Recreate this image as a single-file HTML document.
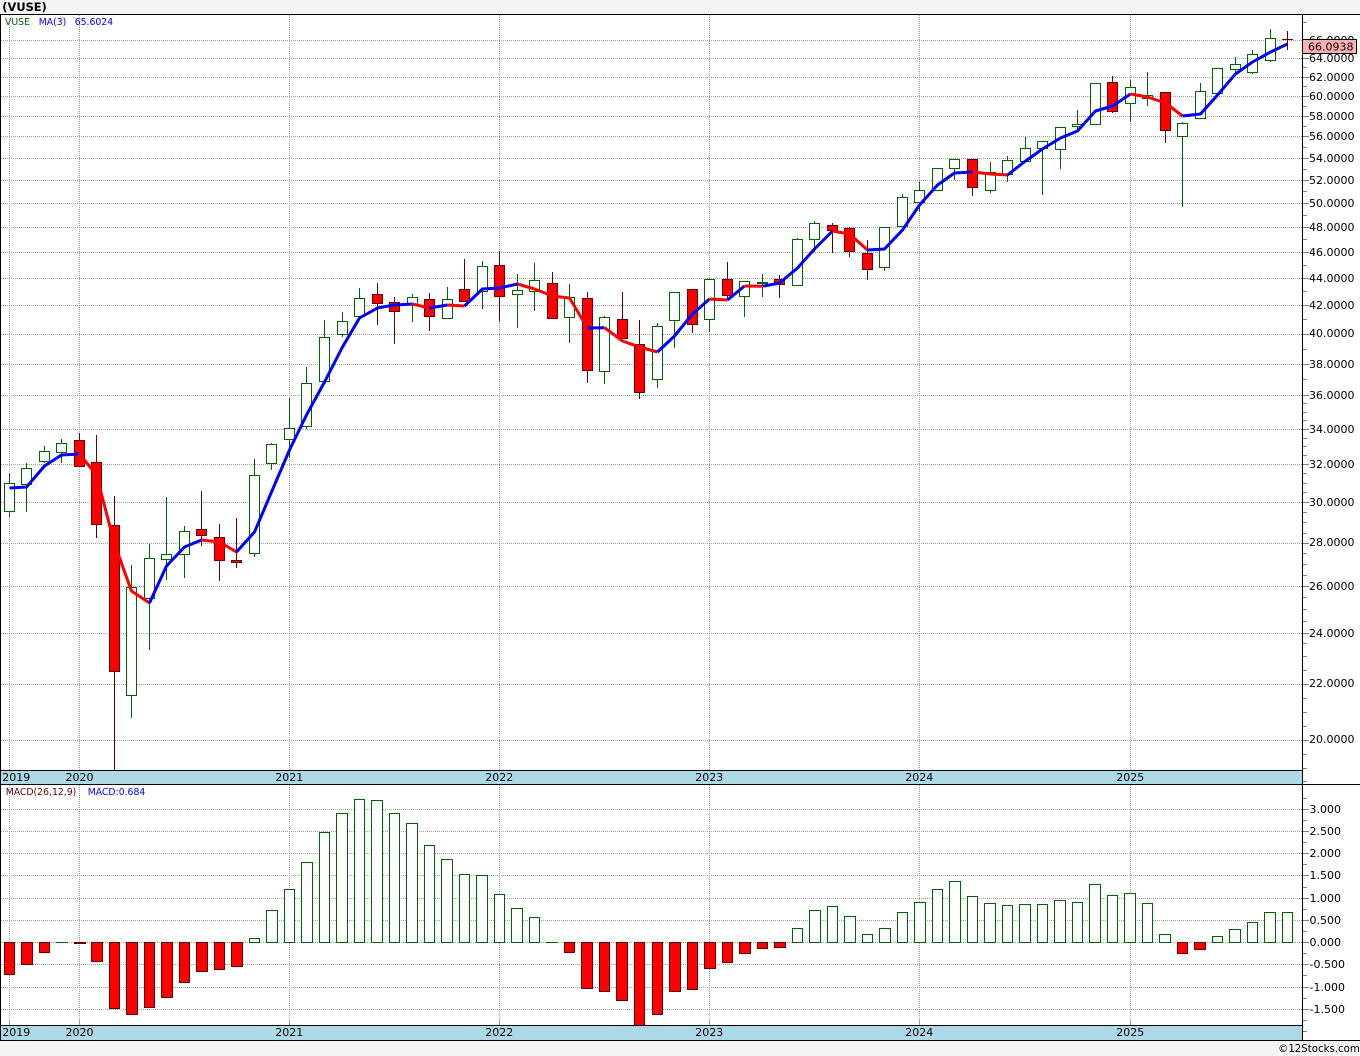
<!DOCTYPE html>
<html lang="en">
<head>
<meta charset="utf-8">
<title>(VUSE)</title>
<style>
html,body{margin:0;padding:0;background:#f4f4f4;}
body{width:1360px;height:1056px;overflow:hidden;position:relative;}
svg{position:absolute;left:0;top:0;display:block;}
text{font-family:"DejaVu Sans","Liberation Sans",sans-serif;font-size:11px;fill:#000008;}
.t{font-size:11px;}
.s{font-size:9.3px;}
</style>
</head>
<body>
<svg width="1360" height="1056" viewBox="0 0 1360 1056" xmlns="http://www.w3.org/2000/svg">
<rect x="0" y="0" width="1360" height="1056" fill="#f4f4f4"/>
<rect x="1" y="15" width="1359" height="1025" fill="#ffffff"/>

<!-- grid -->
<path shape-rendering="crispEdges" fill="none" stroke="#a0a0a0" stroke-width="1" stroke-dasharray="1 1" d="M1 40.5H1302M1 58.5H1302M1 77.5H1302M1 96.5H1302M1 116.5H1302M1 136.5H1302M1 158.5H1302M1 180.5H1302M1 203.5H1302M1 227.5H1302M1 252.5H1302M1 278.5H1302M1 305.5H1302M1 334.5H1302M1 364.5H1302M1 395.5H1302M1 429.5H1302M1 464.5H1302M1 502.5H1302M1 543.5H1302M1 586.5H1302M1 633.5H1302M1 684.5H1302M1 740.5H1302
M1 809.5H1302M1 831.5H1302M1 853.5H1302M1 875.5H1302M1 898.5H1302M1 920.5H1302M1 942.5H1302M1 964.5H1302M1 987.5H1302M1 1009.5H1302
M9.5 15V770M79.5 15V770M289.5 15V770M499.5 15V770M709.5 15V770M919.5 15V770M1130.5 15V770
M9.5 785V1025M79.5 785V1025M289.5 785V1025M499.5 785V1025M709.5 785V1025M919.5 785V1025M1130.5 785V1025"/>
<path shape-rendering="crispEdges" fill="none" stroke="#a0a0a0" stroke-width="1" d="M9.5 1020V1025M79.5 1020V1025M289.5 1020V1025M499.5 1020V1025M709.5 1020V1025M919.5 1020V1025M1130.5 1020V1025"/>

<!-- candle wicks -->
<path shape-rendering="crispEdges" fill="none" stroke="#006400" stroke-width="1" d="M9.5 473V517M26.5 463V512M44.5 446V463M61.5 439V463M131.5 565V718M149.5 544V650M166.5 497V580M184.5 526V578M254.5 459V557M271.5 443V470M289.5 398V458M306.5 367V429M324.5 320V381M342.5 312V337M359.5 288V316M412.5 294V322M447.5 287V318M482.5 261V309M517.5 274V328M534.5 263V311M569.5 284V343M604.5 316V384M657.5 323V388M674.5 292V348M709.5 279V332M744.5 281V317M762.5 274V297M797.5 238V285M814.5 221V252M884.5 227V271M902.5 194V226M919.5 182V212M937.5 168V190M954.5 159V180M990.5 162V193M1007.5 156V182M1025.5 137V161M1042.5 141V195M1060.5 127V169M1077.5 110V129M1095.5 83V124M1130.5 80V121M1147.5 72V106M1182.5 122V207M1200.5 83V119M1217.5 68V93M1235.5 57V75M1252.5 50V74M1270.5 29V62"/>
<path shape-rendering="crispEdges" fill="none" stroke="#640000" stroke-width="1" d="M79.5 433V467M96.5 435V538M114.5 496V770M201.5 491V546M219.5 524V581M236.5 518V568M377.5 283V325M394.5 297V344M429.5 293V331M464.5 259V301M499.5 251V321M552.5 272V318M587.5 292V383M622.5 292V338M639.5 320V399M692.5 289V333M727.5 262V300M779.5 275V298M832.5 223V253M849.5 227V257M867.5 240V280M972.5 159V196M1112.5 76V113M1165.5 92V143M1287.5 31V50M1282 39.5H1293"/>

<!-- candle bodies: green hollow -->
<path shape-rendering="crispEdges" fill="#ffffff" stroke="#006400" stroke-width="1" d="M4.5 483.5h10v28h-10zM21.5 468.5h10v16h-10zM39.5 451.5h10v10h-10zM56.5 443.5h10v9h-10zM126.5 587.5h10v108h-10zM144.5 558.5h10v40h-10zM161.5 554.5h10v5h-10zM179.5 531.5h10v23h-10zM249.5 475.5h10v78h-10zM266.5 444.5h10v19h-10zM284.5 428.5h10v11h-10zM301.5 383.5h10v43h-10zM319.5 337.5h10v44h-10zM337.5 321.5h10v13h-10zM354.5 298.5h10v18h-10zM407.5 297.5h10v7h-10zM442.5 299.5h10v19h-10zM477.5 266.5h10v25h-10zM512.5 290.5h10v4h-10zM529.5 280.5h10v11h-10zM564.5 297.5h10v20h-10zM599.5 317.5h10v54h-10zM652.5 326.5h10v53h-10zM669.5 292.5h10v28h-10zM704.5 279.5h10v40h-10zM739.5 281.5h10v15h-10zM757.5 282.5h10v1h-10zM792.5 239.5h10v46h-10zM809.5 223.5h10v16h-10zM879.5 227.5h10v40h-10zM897.5 197.5h10v29h-10zM914.5 190.5h10v12h-10zM932.5 168.5h10v22h-10zM949.5 159.5h10v9h-10zM985.5 172.5h10v18h-10zM1002.5 160.5h10v14h-10zM1020.5 148.5h10v13h-10zM1037.5 141.5h10v7h-10zM1055.5 127.5h10v22h-10zM1072.5 124.5h10v2h-10zM1090.5 83.5h10v41h-10zM1125.5 87.5h10v16h-10zM1142.5 95.5h10v3h-10zM1177.5 123.5h10v13h-10zM1195.5 91.5h10v27h-10zM1212.5 68.5h10v25h-10zM1230.5 64.5h10v5h-10zM1247.5 54.5h10v18h-10zM1265.5 38.5h10v22h-10z"/>
<!-- candle bodies: red -->
<path shape-rendering="crispEdges" fill="#ff0000" stroke="#640000" stroke-width="1" d="M74.5 440.5h10v26h-10zM91.5 462.5h10v62h-10zM109.5 525.5h10v146h-10zM196.5 529.5h10v6h-10zM214.5 537.5h10v23h-10zM231.5 560.5h10v2h-10zM372.5 294.5h10v9h-10zM389.5 302.5h10v9h-10zM424.5 299.5h10v17h-10zM459.5 289.5h10v12h-10zM494.5 265.5h10v31h-10zM547.5 283.5h10v35h-10zM582.5 298.5h10v72h-10zM617.5 319.5h10v19h-10zM634.5 344.5h10v48h-10zM687.5 289.5h10v35h-10zM722.5 279.5h10v16h-10zM774.5 279.5h10v5h-10zM827.5 225.5h10v5h-10zM844.5 228.5h10v23h-10zM862.5 253.5h10v16h-10zM967.5 159.5h10v28h-10zM1107.5 82.5h10v29h-10zM1160.5 92.5h10v38h-10z"/>

<!-- moving average -->
<g fill="none" stroke-width="3" stroke-linejoin="round" stroke-linecap="butt" transform="translate(0.5 0)">
<polyline stroke="#0000ff" points="9,488 26,487 44,466 61,455 79,454"/>
<polyline stroke="#ff0000" points="79,454 96,475 114,544 131,591 149,603"/>
<polyline stroke="#0000ff" points="149,603 166,566 184,547 201,540"/>
<polyline stroke="#ff0000" points="201,540 219,542 236,552"/>
<polyline stroke="#0000ff" points="236,552 254,532 271,492 289,450 306,415 324,382 342,347 359,318 377,308 394,305 412,304"/>
<polyline stroke="#ff0000" points="412,304 429,308"/>
<polyline stroke="#0000ff" points="429,308 447,305"/>
<polyline stroke="#ff0000" points="447,305 464,306"/>
<polyline stroke="#0000ff" points="464,306 482,289 499,288 517,284"/>
<polyline stroke="#ff0000" points="517,284 534,289 552,296 569,298 587,328"/>
<polyline stroke="#0000ff" points="587,328 604,327.7"/>
<polyline stroke="#ff0000" points="604,327.7 622,341 639,347 657,352"/>
<polyline stroke="#0000ff" points="657,352 674,336 692,314 709,299"/>
<polyline stroke="#ff0000" points="709,299 727,300"/>
<polyline stroke="#0000ff" points="727,300 744,286"/>
<polyline stroke="#ff0000" points="744,286 762,286.3"/>
<polyline stroke="#0000ff" points="762,286.3 779,283 797,268 814,249 832,231"/>
<polyline stroke="#ff0000" points="832,231 849,234 867,250"/>
<polyline stroke="#0000ff" points="867,250 884,249 902,230 919,205 937,185 954,173 972,172"/>
<polyline stroke="#ff0000" points="972,172 990,174 1007,175"/>
<polyline stroke="#0000ff" points="1007,175 1025,161 1042,149 1060,138 1077,131 1095,111 1112,106 1130,94"/>
<polyline stroke="#ff0000" points="1130,94 1147,97 1165,103 1182,116"/>
<polyline stroke="#0000ff" points="1182,116 1200,114 1217,95 1235,74 1252,62 1270,52 1287,44"/>
</g>

<!-- MACD bars: green hollow -->
<path shape-rendering="crispEdges" fill="#ffffff" stroke="#006400" stroke-width="1" d="M249.5 938.5h10V942.5h-10zM266.5 910.5h11V942.5h-11zM284.5 889.5h10V942.5h-10zM301.5 862.5h11V942.5h-11zM319.5 832.5h10V942.5h-10zM336.5 813.5h11V942.5h-11zM354.5 799.5h10V942.5h-10zM371.5 800.5h11V942.5h-11zM389.5 813.5h10V942.5h-10zM406.5 823.5h11V942.5h-11zM424.5 845.5h10V942.5h-10zM441.5 859.5h11V942.5h-11zM459.5 874.5h10V942.5h-10zM476.5 875.5h11V942.5h-11zM494.5 894.5h10V942.5h-10zM511.5 908.5h11V942.5h-11zM529.5 917.5h10V942.5h-10zM792.5 928.5h10V942.5h-10zM809.5 910.5h11V942.5h-11zM827.5 906.5h10V942.5h-10zM844.5 916.5h11V942.5h-11zM862.5 934.5h10V942.5h-10zM879.5 928.5h11V942.5h-11zM897.5 912.5h10V942.5h-10zM914.5 902.5h11V942.5h-11zM932.5 889.5h10V942.5h-10zM949.5 881.5h11V942.5h-11zM967.5 896.5h10V942.5h-10zM984.5 903.5h11V942.5h-11zM1002.5 905.5h10V942.5h-10zM1019.5 904.5h11V942.5h-11zM1037.5 904.5h10V942.5h-10zM1054.5 900.5h11V942.5h-11zM1072.5 902.5h10V942.5h-10zM1089.5 884.5h11V942.5h-11zM1107.5 895.5h10V942.5h-10zM1124.5 893.5h11V942.5h-11zM1142.5 903.5h10V942.5h-10zM1159.5 934.5h11V942.5h-11zM1212.5 936.5h10V942.5h-10zM1229.5 929.5h11V942.5h-11zM1247.5 922.5h10V942.5h-10zM1264.5 912.5h11V942.5h-11zM1282.5 912.5h10V942.5h-10zM56 942.5h12M546 942.5h12"/>
<!-- MACD bars: red -->
<path shape-rendering="crispEdges" fill="#ff0000" stroke="#640000" stroke-width="1" d="M4.5 942.5h10V974.5h-10zM21.5 942.5h11V964.5h-11zM39.5 942.5h10V952.5h-10zM74.5 942.5h11V943.5h-11zM91.5 942.5h11V961.5h-11zM109.5 942.5h10V1008.5h-10zM126.5 942.5h11V1014.5h-11zM144.5 942.5h10V1007.5h-10zM161.5 942.5h11V997.5h-11zM179.5 942.5h10V982.5h-10zM196.5 942.5h11V971.5h-11zM214.5 942.5h10V969.5h-10zM231.5 942.5h11V966.5h-11zM564.5 942.5h10V952.5h-10zM581.5 942.5h11V988.5h-11zM599.5 942.5h10V991.5h-10zM616.5 942.5h11V1000.5h-11zM634.5 942.5h10V1030h-10zM652.5 942.5h10V1014.5h-10zM669.5 942.5h11V991.5h-11zM687.5 942.5h10V989.5h-10zM704.5 942.5h11V968.5h-11zM722.5 942.5h10V962.5h-10zM739.5 942.5h11V953.5h-11zM757.5 942.5h10V948.5h-10zM774.5 942.5h11V947.5h-11zM1177.5 942.5h10V953.5h-10zM1194.5 942.5h11V949.5h-11z"/>

<!-- bands -->
<rect x="1" y="771" width="1301" height="13" fill="#add8e6"/>
<rect x="1" y="1026" width="1301" height="14" fill="#add8e6"/>

<!-- axis ticks -->
<path shape-rendering="crispEdges" fill="none" stroke="#808080" stroke-width="1" d="M1303 40.5h6M1303 58.5h6M1303 77.5h6M1303 96.5h6M1303 116.5h6M1303 136.5h6M1303 158.5h6M1303 180.5h6M1303 203.5h6M1303 227.5h6M1303 252.5h6M1303 278.5h6M1303 305.5h6M1303 334.5h6M1303 364.5h6M1303 395.5h6M1303 429.5h6M1303 464.5h6M1303 502.5h6M1303 543.5h6M1303 586.5h6M1303 633.5h6M1303 684.5h6M1303 740.5h6
M1303 22.5h4M1303 67.5h4M1303 86.5h4M1303 106.5h4M1303 126.5h4M1303 147.5h4M1303 169.5h4M1303 191.5h4M1303 215.5h4M1303 239.5h4M1303 265.5h4M1303 291.5h4M1303 319.5h4M1303 349.5h4M1303 379.5h4M1303 403.5h4M1303 412.5h4M1303 420.5h4M1303 438.5h4M1303 446.5h4M1303 455.5h4M1303 473.5h4M1303 483.5h4M1303 492.5h4M1303 512.5h4M1303 522.5h4M1303 533.5h4M1303 553.5h4M1303 564.5h4M1303 575.5h4M1303 597.5h4M1303 609.5h4M1303 621.5h4M1303 643.5h4M1303 656.5h4M1303 670.5h4M1303 698.5h4M1303 712.5h4M1303 726.5h4M1303 754.5h4M1303 768.5h4M1303 781.5h4
M1303 809.5h6M1303 831.5h6M1303 853.5h6M1303 875.5h6M1303 898.5h6M1303 920.5h6M1303 942.5h6M1303 964.5h6M1303 987.5h6M1303 1009.5h6
M1303 798.5h4M1303 820.5h4M1303 842.5h4M1303 864.5h4M1303 887.5h4M1303 909.5h4M1303 931.5h4M1303 953.5h4M1303 975.5h4M1303 998.5h4M1303 1020.5h4M1303 1031.5h4"/>

<!-- borders -->
<path shape-rendering="crispEdges" fill="none" stroke="#000000" stroke-width="1" d="M0 14.5H1360M0 770.5H1302M0 784.5H1360M0 1025.5H1302M0 1040.5H1360M0.5 14V1041M1302.5 14V1041"/>

<!-- price axis labels -->
<text class="t" x="1309" y="44">66.0000</text>
<text class="t" x="1309" y="62">64.0000</text>
<text class="t" x="1309" y="81">62.0000</text>
<text class="t" x="1309" y="100">60.0000</text>
<text class="t" x="1309" y="120">58.0000</text>
<text class="t" x="1309" y="140">56.0000</text>
<text class="t" x="1309" y="162">54.0000</text>
<text class="t" x="1309" y="184">52.0000</text>
<text class="t" x="1309" y="207">50.0000</text>
<text class="t" x="1309" y="231">48.0000</text>
<text class="t" x="1309" y="256">46.0000</text>
<text class="t" x="1309" y="282">44.0000</text>
<text class="t" x="1309" y="309">42.0000</text>
<text class="t" x="1309" y="337">40.0000</text>
<text class="t" x="1309" y="368">38.0000</text>
<text class="t" x="1309" y="399">36.0000</text>
<text class="t" x="1309" y="433">34.0000</text>
<text class="t" x="1309" y="468">32.0000</text>
<text class="t" x="1309" y="506">30.0000</text>
<text class="t" x="1309" y="546">28.0000</text>
<text class="t" x="1309" y="590">26.0000</text>
<text class="t" x="1309" y="637">24.0000</text>
<text class="t" x="1309" y="687">22.0000</text>
<text class="t" x="1309" y="743">20.0000</text>

<!-- price tag -->
<rect x="1302.5" y="39.5" width="54" height="14" fill="#ffb0b0" stroke="#000000" stroke-width="1" shape-rendering="crispEdges"/>
<text class="t" x="1308" y="50.5">66.0938</text>

<!-- MACD axis labels -->
<text class="t" x="1309.5" y="813">3.000</text>
<text class="t" x="1309.5" y="835">2.500</text>
<text class="t" x="1309.5" y="857">2.000</text>
<text class="t" x="1309.5" y="879">1.500</text>
<text class="t" x="1309.5" y="902">1.000</text>
<text class="t" x="1309.5" y="924">0.500</text>
<text class="t" x="1309.5" y="946">0.000</text>
<text class="t" x="1309.5" y="968">-0.500</text>
<text class="t" x="1309.5" y="991">-1.000</text>
<text class="t" x="1309.5" y="1013">-1.500</text>

<!-- year labels -->
<text class="t" x="2.3" y="781">2019</text>
<text class="t" x="65.5" y="781">2020</text>
<text class="t" x="275.3" y="781">2021</text>
<text class="t" x="485.3" y="781">2022</text>
<text class="t" x="695.3" y="781">2023</text>
<text class="t" x="905.3" y="781">2024</text>
<text class="t" x="1116.3" y="781">2025</text>
<text class="t" x="2.3" y="1036">2019</text>
<text class="t" x="65.5" y="1036">2020</text>
<text class="t" x="275.3" y="1036">2021</text>
<text class="t" x="485.3" y="1036">2022</text>
<text class="t" x="695.3" y="1036">2023</text>
<text class="t" x="905.3" y="1036">2024</text>
<text class="t" x="1116.3" y="1036">2025</text>

<!-- legends -->
<text class="s" x="5" y="25" style="fill:#006400">VUSE</text>
<text class="s" x="38.7" y="25" style="fill:#0000ff">MA(3)</text>
<text class="s" x="74.7" y="25" style="fill:#0000ff">65.6024</text>
<text class="s" x="5.7" y="795" style="fill:#640000">MACD(26,12,9)</text>
<text class="s" x="87.7" y="795" style="fill:#0000ff">MACD:0.684</text>

<!-- title and footer -->
<text x="2.3" y="11" style="font-weight:bold;font-size:11.4px;fill:#000">(VUSE)</text>
<text x="1359.8" y="1052" text-anchor="end" style="font-size:10.2px;fill:#000">©12Stocks.com</text>
</svg>
</body>
</html>
